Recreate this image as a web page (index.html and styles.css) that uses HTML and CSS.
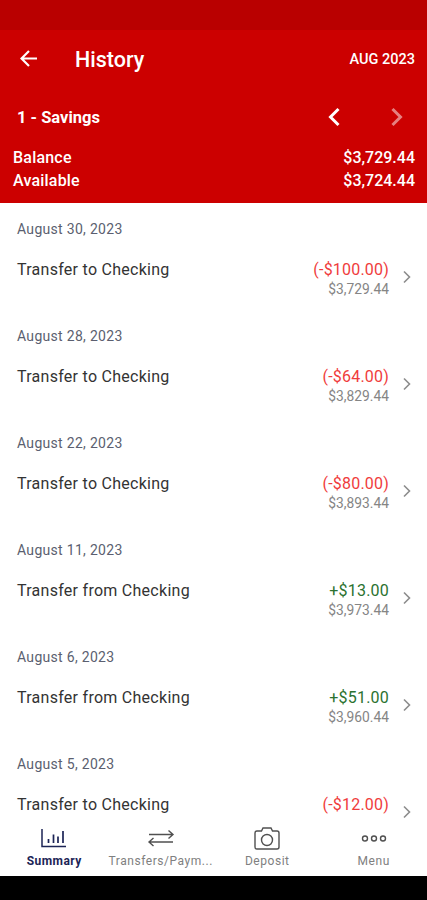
FILE: index.html
```html
<!DOCTYPE html>
<html lang="en">
<head>
  <meta charset="UTF-8">
  <meta name="viewport" content="width=device-width, initial-scale=1">
  <title>History</title>
  <link rel="stylesheet" href="styles.css">
</head>
<body>
  <div class="status-bar"></div>

  <header class="header">
    <div class="title-row">
      <svg class="back" viewBox="0 0 18 18"><path d="M17 8.500H2M9 1L1.500 8.500L9 16"/></svg>
      <h1>History</h1>
      <span class="month">AUG 2023</span>
    </div>
    <div class="account-row">
      <span class="account">1 - Savings</span>
      <svg class="arrow" viewBox="0 0 12 20"><path d="M10.5 2L2.5 10L10.5 18"/></svg>
      <svg class="arrow next" viewBox="0 0 12 20"><path d="M1.5 2L9.5 10L1.5 18"/></svg>
    </div>
    <div class="balance-row"><span class="label">Balance</span><span>$3,729.44</span></div>
    <div class="balance-row"><span class="label">Available</span><span>$3,724.44</span></div>
  </header>

  <main class="list">
    <section class="day">
      <h2>August 30, 2023</h2>
      <div class="item">
        <span class="name">Transfer to Checking</span>
        <div class="amounts"><span class="amount minus">(-$100.00)</span><span class="total">$3,729.44</span></div>
        <svg class="chevron" viewBox="0 0 8 14"><path d="M1 1.5L6.5 7L1 12.5"/></svg>
      </div>
    </section>
    <section class="day">
      <h2>August 28, 2023</h2>
      <div class="item">
        <span class="name">Transfer to Checking</span>
        <div class="amounts"><span class="amount minus">(-$64.00)</span><span class="total">$3,829.44</span></div>
        <svg class="chevron" viewBox="0 0 8 14"><path d="M1 1.5L6.5 7L1 12.5"/></svg>
      </div>
    </section>
    <section class="day">
      <h2>August 22, 2023</h2>
      <div class="item">
        <span class="name">Transfer to Checking</span>
        <div class="amounts"><span class="amount minus">(-$80.00)</span><span class="total">$3,893.44</span></div>
        <svg class="chevron" viewBox="0 0 8 14"><path d="M1 1.5L6.5 7L1 12.5"/></svg>
      </div>
    </section>
    <section class="day">
      <h2>August 11, 2023</h2>
      <div class="item">
        <span class="name">Transfer from Checking</span>
        <div class="amounts"><span class="amount plus">+$13.00</span><span class="total">$3,973.44</span></div>
        <svg class="chevron" viewBox="0 0 8 14"><path d="M1 1.5L6.5 7L1 12.5"/></svg>
      </div>
    </section>
    <section class="day">
      <h2>August 6, 2023</h2>
      <div class="item">
        <span class="name">Transfer from Checking</span>
        <div class="amounts"><span class="amount plus">+$51.00</span><span class="total">$3,960.44</span></div>
        <svg class="chevron" viewBox="0 0 8 14"><path d="M1 1.5L6.5 7L1 12.5"/></svg>
      </div>
    </section>
    <section class="day">
      <h2>August 5, 2023</h2>
      <div class="item">
        <span class="name">Transfer to Checking</span>
        <div class="amounts"><span class="amount minus">(-$12.00)</span></div>
        <svg class="chevron" viewBox="0 0 8 14"><path d="M1 1.5L6.5 7L1 12.5"/></svg>
      </div>
    </section>
  </main>

  <nav class="tabs">
    <a class="tab active">
      <svg viewBox="0 0 28 24"><path class="axis" d="M2 3V20.500H26"/><path d="M8.500 13V17M13.500 8.500V17M18 10.500V17M23 5V17"/></svg>
      <span>Summary</span>
    </a>
    <a class="tab">
      <svg viewBox="0 0 28 24"><path d="M2 8.500H26M21.500 4.500L26 8.500L21.500 12.500M26 16H2M6.500 12L2 16L6.500 20"/></svg>
      <span>Transfers/Paym...</span>
    </a>
    <a class="tab">
      <svg viewBox="0 0 28 24"><path d="M4 5H8.500L10 2H18L19.500 5H24Q26 5 26 7V21Q26 23 24 23H4Q2 23 2 21V7Q2 5 4 5Z"/><circle cx="14" cy="14" r="5.500"/></svg>
      <span>Deposit</span>
    </a>
    <a class="tab">
      <svg viewBox="0 0 28 24"><circle cx="5" cy="12.500" r="2.500"/><circle cx="14" cy="12.500" r="2.500"/><circle cx="23" cy="12.500" r="2.500"/></svg>
      <span>Menu</span>
    </a>
  </nav>
</body>
</html>
```
FILE: styles.css
```css
* {
  box-sizing: border-box;
}

body {
  margin: 0;
  height: 900px;
  padding-bottom: 24px;
  display: flex;
  flex-direction: column;
  overflow: hidden;
  background: #000;
  font-family: Roboto, sans-serif;
}

svg {
  flex: none;
  fill: none;
  stroke: currentColor;
}

h1, h2 {
  margin: 0;
}

.status-bar {
  height: 30px;
  flex: none;
  background: #b90000;
}

.header {
  height: 173px;
  flex: none;
  padding: 0 12px 0 13px;
  background: #cc0000;
  color: #fff;
}

.title-row {
  display: flex;
  align-items: center;
  height: 58px;
  padding-left: 7px;
}

.back {
  width: 18px;
  height: 18px;
  stroke-width: 2.200;
}

.title-row h1 {
  margin-left: 37px;
  padding-top: 1px;
  font-size: 21.500px;
  font-weight: 500;
}

.month {
  margin-left: auto;
  padding-top: 1px;
  font-size: 14.500px;
  font-weight: 500;
}

.account-row {
  display: flex;
  align-items: center;
  height: 58px;
  padding: 0 12px 0 4px;
}

.account {
  flex: 1;
  font-size: 16.500px;
  font-weight: 700;
}

.arrow {
  width: 12px;
  height: 20px;
  stroke-width: 3;
}

.next {
  margin-left: 51px;
  opacity: 0.5;
}

.balance-row {
  display: flex;
  justify-content: space-between;
  font-size: 16px;
  font-weight: 500;
  line-height: 23px;
}

.balance-row .label {
  letter-spacing: 0.2px;
}

.list {
  flex: 1;
  min-height: 0;
  overflow: hidden;
  background: #fff;
}

.day {
  height: 107.100px;
  padding: 16px 16px 0 17px;
}

.day h2 {
  font-size: 14px;
  font-weight: 400;
  line-height: 20px;
  letter-spacing: 0.3px;
  color: #5b5f70;
}

.item {
  display: flex;
  margin-top: 20px;
}

.name {
  flex: 1;
  font-size: 16px;
  line-height: 22px;
  letter-spacing: 0.27px;
  color: #333;
}

.amounts {
  display: flex;
  flex-direction: column;
  align-items: flex-end;
}

.amount {
  font-size: 16px;
  line-height: 22px;
  letter-spacing: 0.2px;
}

.minus {
  color: #f03c3c;
}

.plus {
  color: #2b7230;
}

.total {
  font-size: 13.800px;
  line-height: 17px;
  color: #858585;
}

.chevron {
  width: 8px;
  height: 14px;
  margin: 11px 0 0 14px;
  stroke-width: 1.600;
  color: #8c8c8c;
}

.tabs {
  display: flex;
  height: 56px;
  flex: none;
  padding: 6px 0 0 1px;
  background: #fff;
}

.tab {
  flex: 1 1 0;
  min-width: 0;
  display: flex;
  flex-direction: column;
  align-items: center;
  font-size: 12px;
  line-height: 16px;
  letter-spacing: 0.55px;
  color: #808080;
}

.tab svg {
  width: 28px;
  height: 24px;
  margin-bottom: 3px;
  stroke-width: 1.400;
  color: #505050;
}

.tab.active,
.tab.active svg {
  color: #1c2456;
}

.tab.active svg {
  stroke-width: 1.700;
}

.tab.active .axis {
  stroke-width: 1.500;
}

.tab.active {
  font-weight: 700;
  letter-spacing: 0.45px;
}
```
